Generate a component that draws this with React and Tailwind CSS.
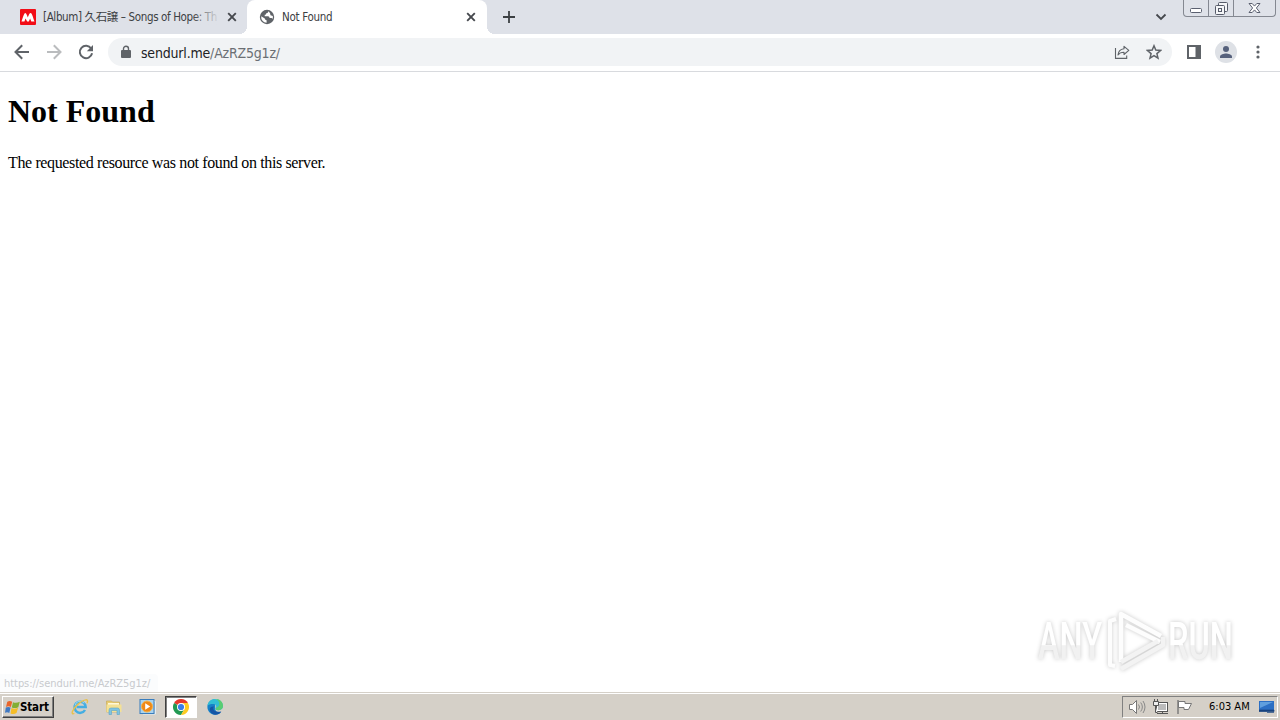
import React from 'react';

const CloseX = () => (
    <svg width="10" height="10" viewBox="0 0 10 10" className="shrink-0">
        <path d="M1.2 1.2 8.8 8.8M8.8 1.2 1.2 8.8" stroke="#45484d" strokeWidth="1.9" />
    </svg>
);

const TabStrip = () => (
    <div className="flex h-[34px] bg-[#dee1e8]">
        <div className="flex w-[247px] items-center pl-5">
            <svg width="16" height="16" viewBox="0 0 16 16" className="shrink-0">
                <rect width="16" height="16" rx="1" fill="#f20d17" />
                <path d="M1.5 12.5C3 8.5 4 4 5.3 4c1.1 0 1.6 2.2 2.5 4.6C8.8 6 9.5 4 10.6 4c1.5 0 2.4 4.5 3.9 8.5h-3.2l-1.2-3-1.3 3H7.1L5.6 9.4l-1.2 3.1z" fill="#fff" />
            </svg>
            <div className="relative ml-[7px] w-[177px] shrink-0 whitespace-nowrap text-[11.5px] leading-4 tracking-[-0.37px] text-[#3c4043]">
                [Album] 久石譲 – Songs of Hope: Th
                <div className="absolute top-0 right-0 h-4 w-7 bg-gradient-to-r from-transparent to-[#dee1e8]"></div>
            </div>
            <div className="ml-[7px] flex"><CloseX /></div>
        </div>

        {/* Active tab */}
        <div className="relative flex w-[240px] items-center rounded-t-lg bg-white pl-3">
            <div className="absolute bottom-0 -left-2 h-2 w-2 bg-[radial-gradient(circle_at_0_0,#dee1e8_8px,#fff_8px)]"></div>
            <div className="absolute -right-2 bottom-0 h-2 w-2 bg-[radial-gradient(circle_at_100%_0,#dee1e8_8px,#fff_8px)]"></div>
            <svg width="16" height="16" viewBox="0 0 16 16" className="shrink-0">
                <circle cx="8" cy="8" r="7.2" fill="#5f6368" />
                <path d="M9.3 2.2c-.1 1.4-.7 1.7-2 2-.3 1-.6 1.5-1.6 1.6v1.5H9c1.1 0 1.5.8 1.5 1.8h1.4c.9 0 1.4.4 1.7 1A6 6 0 0 0 13.8 7l-2.3-.7L11 4z M2.2 7.2 5.8 9.6c.3 1.2.8 1.5 1.8 1.6v2.6A5.9 5.9 0 0 1 2.2 7.2z" fill="#fff" />
            </svg>
            <span className="ml-[7px] w-[184px] text-[11.5px] leading-4 tracking-[-0.3px] text-[#3c4043]">Not Found</span>
            <CloseX />
        </div>

        <div className="flex items-center pl-4">
            <svg width="12" height="12" viewBox="0 0 12 12">
                <path d="M6 0v12M0 6h12" stroke="#3c4043" strokeWidth="1.8" />
            </svg>
        </div>

        <div className="ml-auto flex">
            <svg width="12" height="8" viewBox="0 0 12 8" className="mt-[13px] mr-4">
                <path d="m1.5 1.5 4.5 4.5 4.5-4.5" fill="none" stroke="#45484d" strokeWidth="1.8" />
            </svg>
            <div className="mr-1 flex h-[17px] w-[93px] rounded-b-[4px] border border-t-0 border-[#848891] bg-[#dfe2e9]">
                <div className="flex w-[25px] justify-center border-r border-[#848891]">
                    <svg width="12" height="16" viewBox="0 0 12 16">
                        <rect x=".5" y="8.5" width="11" height="4" rx="1" fill="#fff" stroke="#5b6070" />
                    </svg>
                </div>
                <div className="flex w-[25px] justify-center border-r border-[#848891]">
                    <svg width="13" height="16" viewBox="0 0 13 16" fill="#f5f6f8" stroke="#565b69">
                        <rect x="3.5" y="2.5" width="9" height="9" rx="1" />
                        <rect x=".5" y="5.5" width="9" height="9" rx="1" />
                        <rect x="3.5" y="8.5" width="3" height="3" />
                    </svg>
                </div>
                <div className="flex flex-1 justify-center">
                    <svg width="13" height="16" viewBox="0 0 13 16">
                        <path d="M1 3.5h3.2l2.3 2.6 2.3-2.6H12L8.4 8l3.6 4.5H8.8L6.5 9.9l-2.3 2.6H1L4.6 8z" fill="#fff" stroke="#5b6070" />
                    </svg>
                </div>
            </div>
        </div>
    </div>
);

const Toolbar = () => (
    <div className="flex h-[38px] items-center border-b border-[#d8dade] bg-white pb-px pl-[14px]">
        <svg width="16" height="16" viewBox="0 0 16 16" fill="none" stroke="#5f6368" strokeWidth="2">
            <path d="M15 8H2M8.2 1.3 1.5 8l6.7 6.7" />
        </svg>
        <svg width="16" height="16" viewBox="0 0 16 16" fill="none" stroke="#babcbe" strokeWidth="2" className="ml-4">
            <path d="M1 8h13M7.8 1.3 14.5 8l-6.7 6.7" />
        </svg>
        <svg width="16" height="16" viewBox="0 0 16 16" className="ml-4">
            <path d="M13.2 4.5A6.2 6.2 0 1 0 14.1 9.3" fill="none" stroke="#5f6368" strokeWidth="2" />
            <path d="M15 1v6.2H8.8z" fill="#5f6368" />
        </svg>

        <div className="ml-[14px] flex h-[28px] w-[1064px] items-center rounded-full bg-[#f1f3f5] pl-[13px]">
            <svg width="10" height="14" viewBox="0 0 10 14">
                <path d="M2.5 6V3.7a2.5 2.5 0 0 1 5 0V6" fill="none" stroke="#5f6368" strokeWidth="1.4" />
                <rect y="5" width="10" height="8" rx="1" fill="#5f6368" />
            </svg>
            <span className="mt-[2px] ml-[10px] text-[14px] leading-5 tracking-[-0.19px] text-[#202124]">
                sendurl.me<span className="text-[#6b6f74]">/AzRZ5g1z/</span>
            </span>
            <svg width="16" height="16" viewBox="0 0 16 16" fill="none" stroke="#5f6368" strokeWidth="1.1" className="ml-auto">
                <path d="M1.5 4v10.4h11.2v-3" />
                <path d="M10 2.3 14.8 6.4 10 10.5V8.3c-3 0-4.7.8-6 2.7.3-3.4 2.4-5.8 6-6.2z" strokeLinejoin="round" />
            </svg>
            <svg width="16" height="16" viewBox="0 0 16 16" className="mr-[10px] ml-4">
                <path d="m8 1.8 1.8 4.3 4.7.4-3.6 3.1 1.1 4.6L8 11.7l-4 2.5 1.1-4.6-3.6-3.1 4.7-.4z" fill="none" stroke="#5f6368" strokeWidth="1.5" />
            </svg>
        </div>

        <svg width="14" height="14" viewBox="0 0 14 14" className="ml-[15px]">
            <path d="M0 0h14v14H0z M2 2v10h6.5V2z" fill="#5f6368" fillRule="evenodd" />
        </svg>
        <div className="ml-[14px] flex h-[22px] w-[22px] items-center justify-center rounded-full bg-[#dee1e6]">
            <svg width="12" height="12" viewBox="0 0 12 12" fill="#56617c">
                <circle cx="6" cy="3" r="3" />
                <path d="M0 12v-1.5C0 8.4 4 7.4 6 7.4s6 1 6 3.1V12z" />
            </svg>
        </div>
        <svg width="4" height="14" viewBox="0 0 4 14" fill="#5f6368" className="ml-[19px]">
            <circle cx="2" cy="2" r="1.6" />
            <circle cx="2" cy="7" r="1.6" />
            <circle cx="2" cy="12" r="1.6" />
        </svg>
    </div>
);

const Watermark = () => (
    <svg width="220" height="80" viewBox="0 0 220 80" className="absolute right-[30px] bottom-[12px] drop-shadow-[0_0_2px_rgba(0,0,0,0.22)]">
        <defs>
            <linearGradient id="fade" x1="0" y1="0" x2="0" y2="1">
                <stop offset="0.56" stopColor="#fff" />
                <stop offset="0.57" stopColor="#f1f1f1" />
            </linearGradient>
        </defs>
        <g fill="url(#fade)" fontFamily="Roboto, sans-serif" fontSize="51" fontWeight="500">
            <text x="8" y="58" textLength="64" lengthAdjust="spacingAndGlyphs">ANY</text>
            <text x="138" y="58" textLength="65" lengthAdjust="spacingAndGlyphs">RUN</text>
        </g>
        <g fill="none" stroke="#fdfdfd" strokeWidth="4.5" strokeLinejoin="round">
            <path d="M91 61V13l40 22" />
            <path d="M96 24 130 41" />
            <path d="M91 61 128 40" stroke="#f3f3f3" />
            <path d="M86 18l-6 2v44l5 1" strokeWidth="4" />
            <path d="M91 68 133 44v-8" stroke="#f3f3f3" />
        </g>
    </svg>
);

const Taskbar = () => (
    <div className="relative flex h-[27px] items-center border-t border-white bg-[#d5d0c8] pl-[2px] shadow-[0_-1px_0_#d5d0c8]">
        <div className="flex h-[22px] w-[52px] items-center border border-t-white border-r-[#404040] border-b-[#404040] border-l-white pl-[2px] shadow-[inset_-1px_-1px_0_#808080]">
            <svg width="15" height="15" viewBox="0 0 15 15" className="shrink-0">
                <path d="M2.3 1.8C4 .7 5.6.8 7.2 1.7L5.9 7C4.2 6.1 2.8 6.1 1 7z" fill="#e9652b" />
                <path d="M8 2.2c2 .9 4.3.8 6.8-.5l-1.5 5.5C10.8 8.4 8.7 8.3 6.8 7.5z" fill="#82ae35" />
                <path d="M.8 7.6C2.5 6.6 4 6.7 5.6 7.6L4.3 13C2.8 12 1.5 12 0 12.8z" fill="#4079c2" />
                <path d="M6.5 8.1c2 .8 4.2.8 6.6-.4L11.5 13c-2 1.3-4 1.2-6 .4z" fill="#f5bd26" />
            </svg>
            <span className="text-[11.5px] font-bold leading-4 tracking-[-0.15px] text-black">Start</span>
        </div>

        {/* Quick launch icons */}
        <svg width="18" height="18" viewBox="0 0 18 18" className="ml-[17px]" fill="none">
            <path d="M14 12A5.6 5.6 0 1 1 14.7 9H5.5" stroke="#45aee2" strokeWidth="2.5" />
            <path d="M13.2 5.1A5.2 5.2 0 0 0 4 7.5" stroke="#9bdaf4" strokeWidth="1" />
            <path d="M3.3 15.4C-.5 17.4.7 11.5 7.4 5.9 13.2 1 18.3.2 16 5.2" stroke="#e9c14b" strokeWidth="1.4" />
        </svg>
        <svg width="18" height="18" viewBox="0 0 18 18" className="ml-4">
            <path d="M1.5 3h5l1 1h7v10h-13z" fill="#e8cc72" stroke="#c4a654" strokeWidth=".6" />
            <path d="M3 5h11v3H3z" fill="#fff8d8" />
            <path d="M1.5 6.5h15V14h-15z" fill="#f4e194" />
            <path d="M4 16.5V12q0-2 2-2h6.5q2 0 2 2v4.5H12v-4H6.5v4z" fill="#7fc3e2" stroke="#5aa4c6" strokeWidth=".6" />
        </svg>
        <svg width="18" height="18" viewBox="0 0 18 18" className="ml-4">
            <path d="M14.5 3.5h2v12.5H4" fill="none" stroke="#e0edf5" />
            <rect x="1" y="1.5" width="14" height="14" fill="#a9d3ef" stroke="#397dbd" />
            <circle cx="8" cy="8.5" r="5.5" fill="#ef8917" stroke="#f5b34c" />
            <path d="M6.2 5.3v6.4l5-3.2z" fill="#fff" />
        </svg>
        <div className="ml-[8px] flex h-[22px] w-[32px] items-center justify-center border border-t-[#404040] border-r-white border-b-white border-l-[#404040] bg-white shadow-[inset_1px_1px_0_#808080]">
            <svg width="16" height="16" viewBox="0 0 16 16">
                <path d="M8 8 1.07 4A8 8 0 0 1 14.93 4z" fill="#e5392c" />
                <path d="M8 8 1.07 4A8 8 0 0 0 8 16l3.5-6z" fill="#229953" />
                <path d="M8 4h6.93A8 8 0 0 1 8 16l3.5-6z" fill="#fdca22" />
                <circle cx="8" cy="8" r="4" fill="#fff" />
                <circle cx="8" cy="8" r="3.1" fill="#397de9" />
            </svg>
        </div>
        <svg width="16" height="16" viewBox="0 0 16 16" className="ml-[10px]">
            <path d="M8 .2a7.8 7.8 0 1 0 6 13c-3 .6-5-.6-5.7-2.5z" fill="#1681c8" />
            <path d="M.4 7C1 2.4 4 0 8 0c5 0 8 3.4 8 7 0 3-2.5 4.2-5 4.2-2.2 0-3-1-2.2-2.2C10 7 8.5 5 6 5 3.4 5 1.5 5.6.4 7z" fill="#32bed4" />
            <path d="M9 .1c5 .4 7 3.8 7 6.9 0 2.5-2 4-4.5 4.2-2.5 0-3.5-.8-2.6-2.2C13 8 14 3 9 .1z" fill="#5acd72" />
            <path d="M7 7.5c-2 3 .5 6.5 7.3 5C11.5 17 5 16.8 3 12 2 9 4 7.2 7 7.5z" fill="#1555a6" />
        </svg>

        {/* System tray */}
        <div className="mr-[2px] ml-auto flex h-[22px] w-[156px] items-center border border-t-[#808080] border-r-white border-b-white border-l-[#808080] pl-[5px]">
            <svg width="18" height="16" viewBox="0 0 18 16" fill="none">
                <path d="M1.5 5.5h3l4-4v13l-4-4h-3z" fill="#fff" stroke="#777" />
                <path d="M10.5 5.5q2 2.5 0 5M12.7 3.5q3.3 4.5 0 9M15 2q4 6 0 12" stroke="#888" />
            </svg>
            <svg width="18" height="16" viewBox="0 0 18 16" className="ml-[6px]">
                <rect x="4.5" y="3.5" width="11" height="9" fill="#bbb" stroke="#555" />
                <rect x="5.5" y="4.5" width="9" height="7" fill="none" stroke="#fff" />
                <path d="M5 14.5h11M10.5 12.5v2" stroke="#555" />
                <path d="M1.5 2.5h5v4h-5zM2.5 0v2.5M5.5 0v2.5M3.5 6.5v7h2" fill="#eee" stroke="#555" />
            </svg>
            <svg width="17" height="16" viewBox="0 0 17 16" className="ml-[6px]">
                <path d="M2.5 2.5h6.5v2h6.5l-3 6H8v-2H2.5z" fill="#fff" stroke="#777" />
                <path d="M2 1v14" stroke="#777" strokeWidth="1.4" />
            </svg>
            <span className="ml-[16px] w-[50px] whitespace-nowrap text-[11px] leading-4 text-black">6:03 AM</span>
            <svg width="16" height="14" viewBox="0 0 16 14">
                <path d="M0 1h15v9H0z" fill="#2b6fc4" />
                <path d="M1 2h13L1 8z" fill="#5f9fde" />
                <path d="M0 10h15v1.5H0zM8 12.5h7" fill="#17437f" stroke="#17437f" strokeWidth=".7" />
            </svg>
        </div>
    </div>
);

const App = () => {
    return (
        <div className="flex h-[720px] w-[1280px] flex-col overflow-hidden bg-white font-['DejaVu_Sans_Condensed','Noto_Sans_CJK_JP',sans-serif]">
            <TabStrip />
            <Toolbar />
            <main className="relative flex flex-1 flex-col pl-2 font-['Liberation_Serif',serif] text-black">
                <h1 className="mt-[21px] text-[32px] leading-[37px] font-bold">Not Found</h1>
                <p className="mt-[24px] text-[16px] leading-[18px] tracking-[-0.37px]">The requested resource was not found on this server.</p>
                <Watermark />
                <div className="absolute bottom-0 left-0 flex h-[19px] w-[158px] items-center rounded-tr bg-[#fbfcfd] pt-px pl-1 font-['DejaVu_Sans_Condensed',sans-serif] text-[11px] tracking-[-0.05px] whitespace-nowrap text-[#c8cacd]">
                    https://sendurl.me/AzRZ5g1z/
                </div>
            </main>
            <Taskbar />
        </div>
    );
};

export default App;
